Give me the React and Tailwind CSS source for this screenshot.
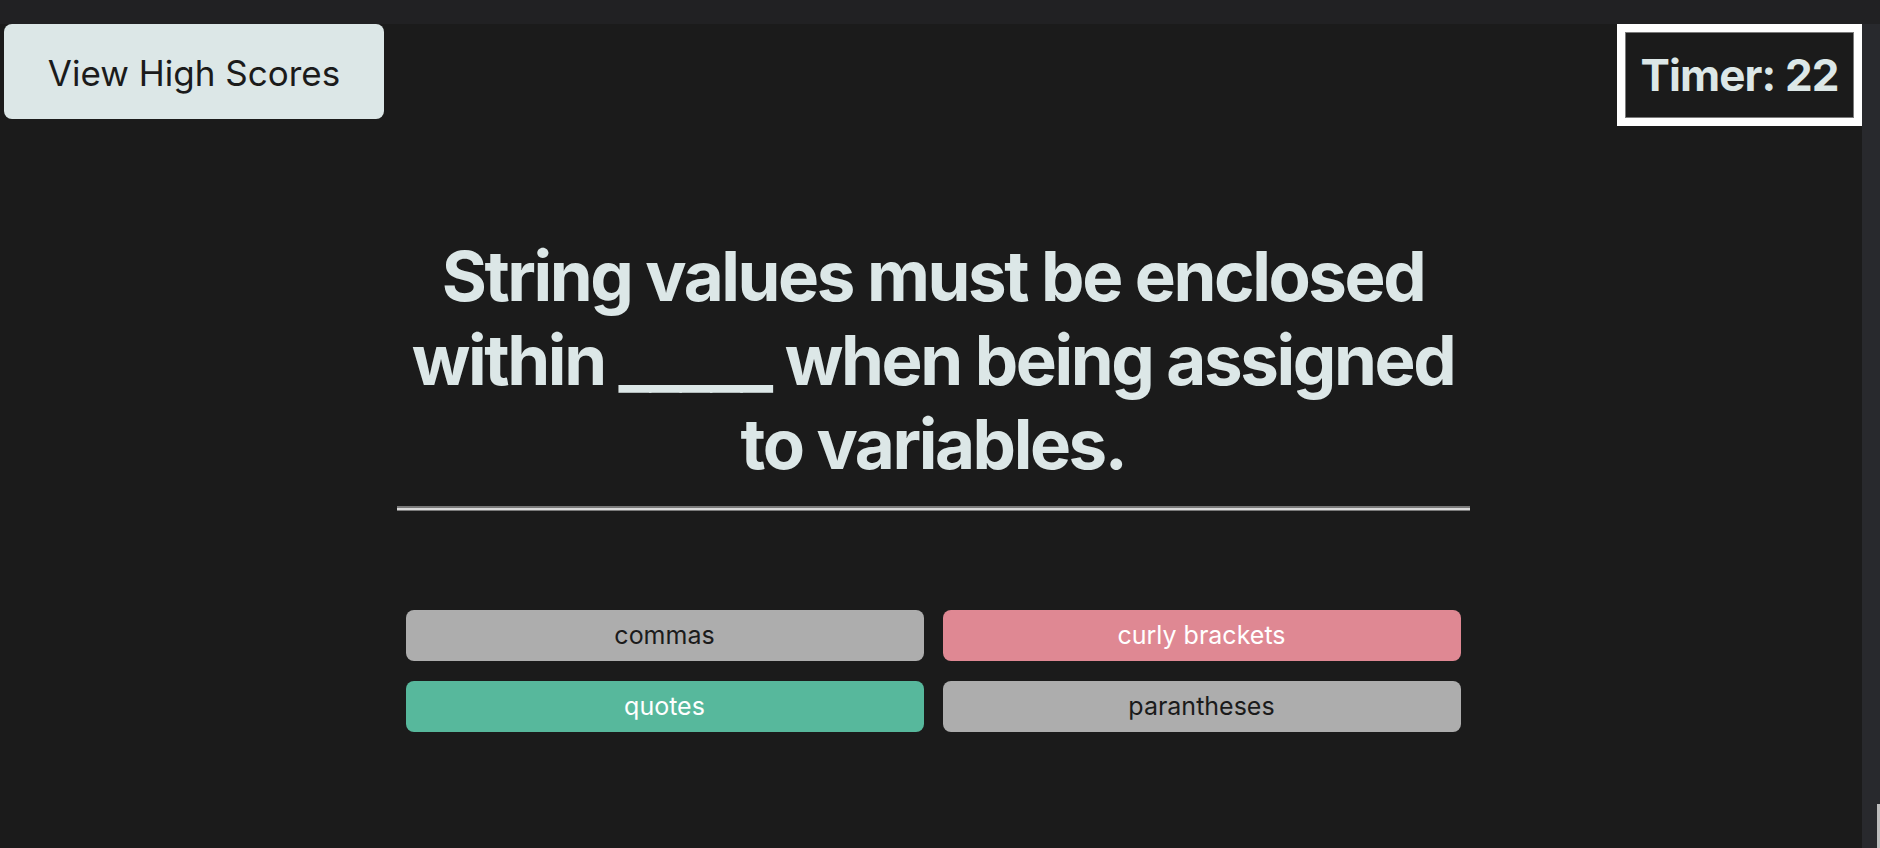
import React from 'react';

const answers = [
    { label: 'commas', tone: 'neutral' },
    { label: 'curly brackets', tone: 'wrong' },
    { label: 'quotes', tone: 'right' },
    { label: 'parantheses', tone: 'neutral' },
];

const toneClass = {
    neutral: 'bg-[#adadad] text-[#1b1b1b]',
    wrong: 'bg-[#df8893] text-white',
    right: 'bg-[#57b89c] text-white',
};

const App = () => {
    return (
        <div className="flex h-[848px] w-[1880px] flex-col overflow-hidden bg-[#212123] font-['Inter',sans-serif]">
            <div className="h-6 shrink-0" />
            <div className="flex min-h-0 flex-1">
                {/* Page */}
                <div className="flex-1 bg-[#1b1b1b]">
                    <header className="flex items-start justify-between pl-1">
                        <button className="h-[95px] w-[380px] rounded-lg bg-[#dce7e7] pt-1 text-[35px] text-[#1b1b1b]">
                            View High Scores
                        </button>
                        <div className="border-8 border-white">
                            <div className="flex h-[86px] w-[229px] items-center justify-center border border-[#7a7a7a] text-[44px] font-bold tracking-[-0.02em] text-[#dce7e7]">
                                Timer: 22
                            </div>
                        </div>
                    </header>

                    <main className="relative left-[2px] mx-auto mt-[108px] w-[1073px]">
                        <h1 className="text-center text-[69px] font-bold leading-[84px] tracking-[-0.035em] text-[#dce7e7]">
                            String values must be enclosed within _____ when being assigned to variables.
                        </h1>
                        <div className="mt-5 h-[5px] border-t-2 border-b border-[#7a7a7a] bg-[#d9d9d9]" />

                        {/* Answers */}
                        <div className="mx-[9px] mt-[99px] grid grid-cols-2 gap-x-[19px] gap-y-5">
                            {answers.map((a) => (
                                <button
                                    key={a.label}
                                    className={`h-[51px] rounded-lg text-[25px] ${toneClass[a.tone]}`}
                                >
                                    {a.label}
                                </button>
                            ))}
                        </div>
                    </main>
                </div>

                {/* Scrollbar gutter */}
                <div className="flex w-[18px] shrink-0 flex-col justify-end bg-[#28292d]">
                    <div className="ml-[15px] h-[44px] w-[3px] bg-[#bdbdbd]" />
                </div>
            </div>
        </div>
    );
};

export default App;
